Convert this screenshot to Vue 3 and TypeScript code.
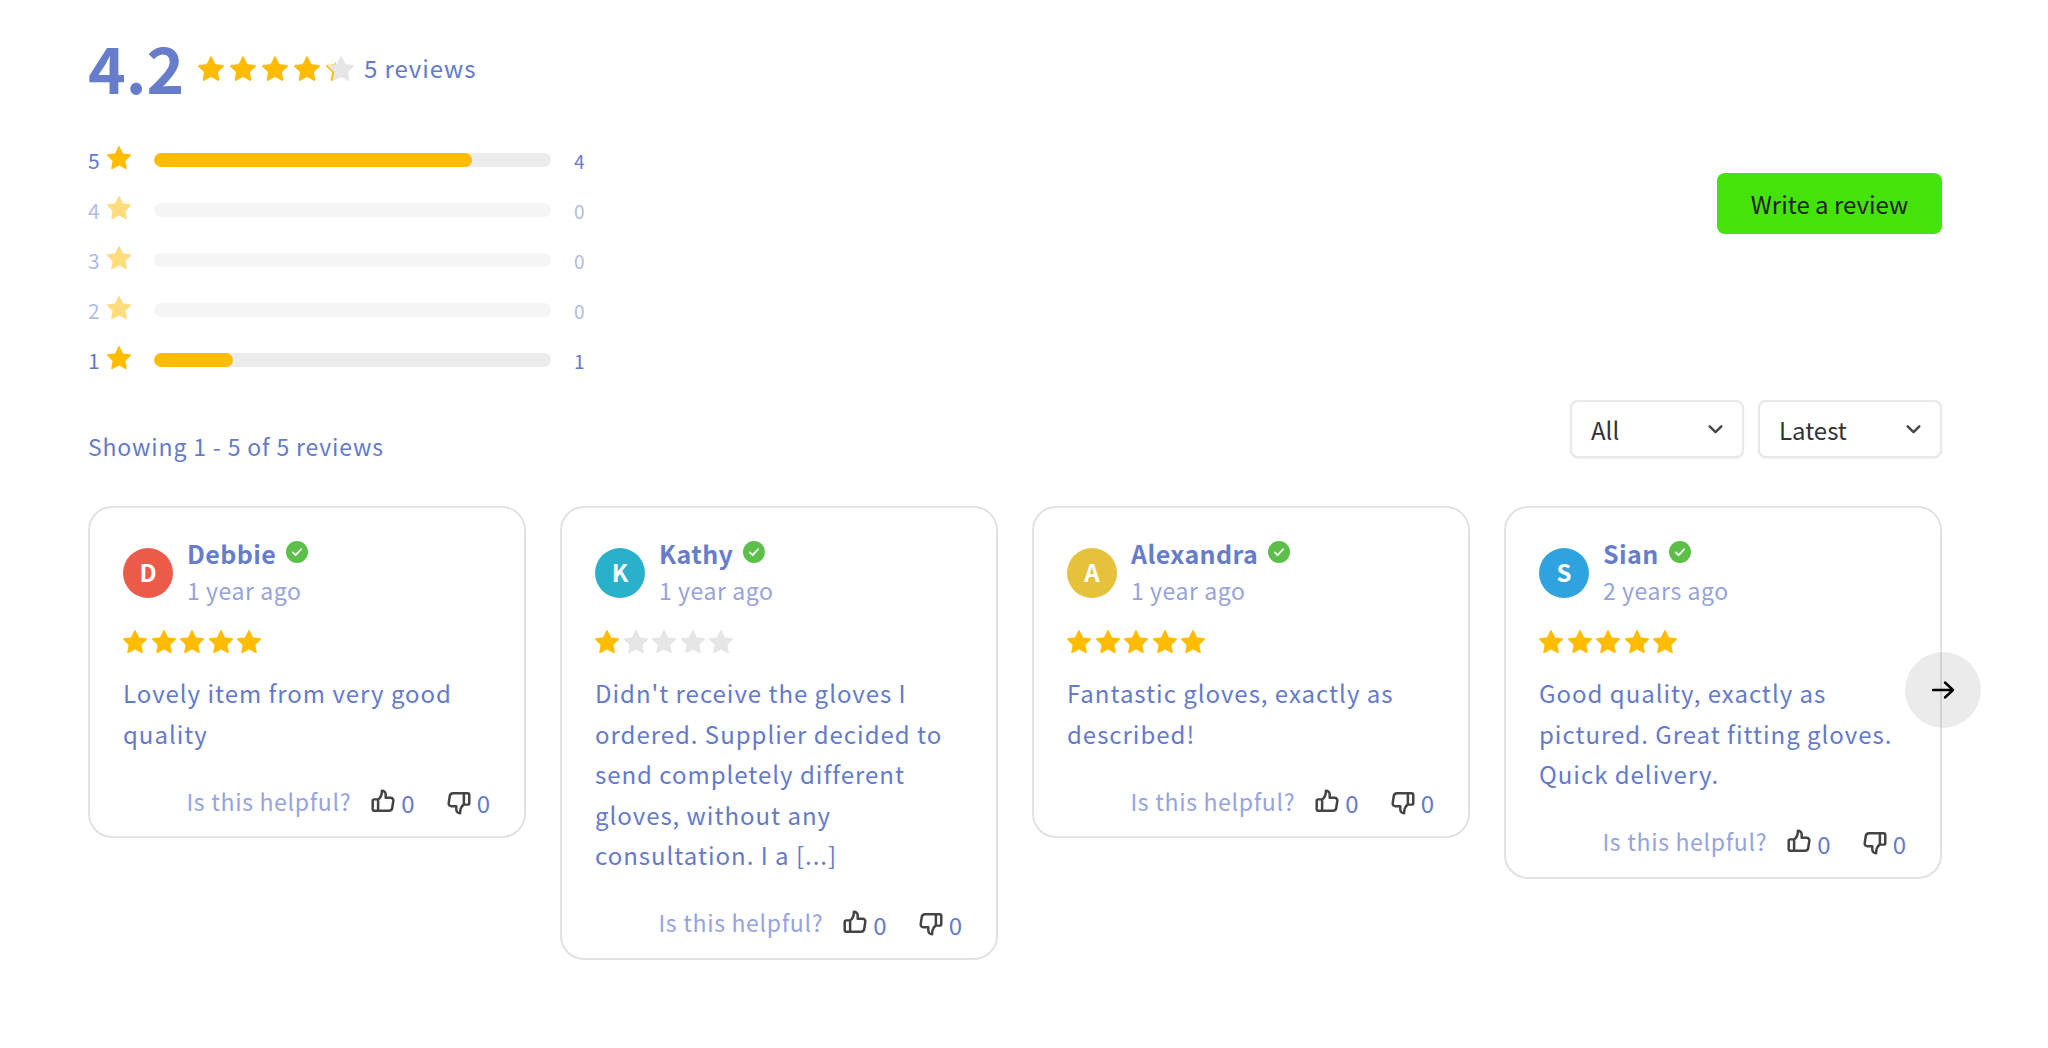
<script setup lang="ts">
interface Review {
  name: string;
  initial: string;
  color: string;
  date: string;
  rating: number;
  text: string;
}

const STAR =
  "M12 2.6l2.9 6.1 6.6.9-4.8 4.6 1.2 6.6L12 17.6l-5.9 3.2 1.2-6.6-4.8-4.6 6.6-.9z";
const THUMB =
  "M7.5 10.5V21H4a1.5 1.5 0 0 1-1.5-1.5V12A1.5 1.5 0 0 1 4 10.5h3.5c2.5-1.5 3.5-5 3.5-8 2 0 3.5 1.5 3.5 3.5v3h4.5a2.5 2.5 0 0 1 2.5 3l-1 6.5A3 3 0 0 1 17.5 21h-10";

const bars = [
  { label: 5, count: 4, width: 80 },
  { label: 4, count: 0, width: 0 },
  { label: 3, count: 0, width: 0 },
  { label: 2, count: 0, width: 0 },
  { label: 1, count: 1, width: 20 },
];

const reviews: Review[] = [
  {
    name: "Debbie",
    initial: "D",
    color: "#ec5a4a",
    date: "1 year ago",
    rating: 5,
    text: "Lovely item from very good quality",
  },
  {
    name: "Kathy",
    initial: "K",
    color: "#29b1cc",
    date: "1 year ago",
    rating: 1,
    text: "Didn't receive the gloves I ordered. Supplier decided to send completely different gloves, without any consultation. I a [...]",
  },
  {
    name: "Alexandra",
    initial: "A",
    color: "#e6c13a",
    date: "1 year ago",
    rating: 5,
    text: "Fantastic gloves, exactly as described!",
  },
  {
    name: "Sian",
    initial: "S",
    color: "#2fa3dd",
    date: "2 years ago",
    rating: 5,
    text: "Good quality, exactly as pictured. Great fitting gloves. Quick delivery.",
  },
];
</script>

<template>
  <div class="page">
    <header class="top">
      <div class="summary">
        <div class="score">
          <span class="score-value">4.2</span>
          <div class="score-stars">
            <svg v-for="n in 4" :key="n" class="star-lg" viewBox="0 0 24 24">
              <path :d="STAR" class="on" />
            </svg>
            <span class="star-part">
              <span class="star-clip">
                <svg class="star-lg" viewBox="0 0 24 24">
                  <path :d="STAR" class="on" />
                </svg>
              </span>
              <svg class="star-lg star-over" viewBox="0 0 24 24">
                <path :d="STAR" class="off" />
              </svg>
            </span>
          </div>
          <span class="score-count">5 reviews</span>
        </div>
        <div class="bars">
          <div
            v-for="bar in bars"
            :key="bar.label"
            class="bar-row"
            :class="{ faded: bar.count === 0 }"
          >
            <span class="bar-label">{{ bar.label }}</span>
            <svg class="star-bar" viewBox="0 0 24 24">
              <path :d="STAR" class="on" />
            </svg>
            <div class="track">
              <div class="fill" :style="{ width: `${bar.width}%` }"></div>
            </div>
            <span class="bar-count">{{ bar.count }}</span>
          </div>
        </div>
      </div>
      <button class="write">Write a review</button>
    </header>

    <div class="toolbar">
      <span class="showing">Showing 1 - 5 of 5 reviews</span>
      <div class="selects">
        <div class="select select-all">
          <span>All</span>
          <svg class="chevron" viewBox="0 0 16 16">
            <path d="M2.5 5l5.5 5.5L13.5 5" />
          </svg>
        </div>
        <div class="select select-latest">
          <span>Latest</span>
          <svg class="chevron" viewBox="0 0 16 16">
            <path d="M2.5 5l5.5 5.5L13.5 5" />
          </svg>
        </div>
      </div>
    </div>

    <div class="cards">
      <article v-for="r in reviews" :key="r.name" class="card">
        <div class="person">
          <div class="avatar" :style="{ background: r.color }">{{ r.initial }}</div>
          <div class="who">
            <div class="name-row">
              <span class="name">{{ r.name }}</span>
              <svg class="verified" viewBox="0 0 24 24">
                <circle cx="12" cy="12" r="12" fill="#5cbf4a" />
                <path d="M7.5 12.5l3 3 6-6.5" fill="none" stroke="#fff" stroke-width="2" stroke-linecap="round" stroke-linejoin="round" />
              </svg>
            </div>
            <div class="date">{{ r.date }}</div>
          </div>
        </div>
        <div class="rating">
          <svg v-for="n in 5" :key="n" class="star-sm" viewBox="0 0 24 24">
            <path :d="STAR" :class="n <= r.rating ? 'on' : 'off'" />
          </svg>
        </div>
        <p class="text">{{ r.text }}</p>
        <div class="helpful">
          <span class="helpful-label">Is this helpful?</span>
          <span class="vote">
            <svg class="thumb" viewBox="0 0 24 24">
              <path :d="THUMB" />
            </svg>
            <span class="vote-count">0</span>
          </span>
          <span class="vote">
            <svg class="thumb down" viewBox="0 0 24 24">
              <path :d="THUMB" />
            </svg>
            <span class="vote-count">0</span>
          </span>
        </div>
      </article>
      <button class="next" aria-label="Next">
        <svg viewBox="0 0 24 24">
          <path d="M2 12h20M14 4.5l8 7.5-8 7.5" />
        </svg>
      </button>
    </div>
  </div>
</template>

<style scoped>
.page {
  padding: 25px 106px 0 88px;
  font-family: "Noto Sans CJK SC", "Noto Sans", sans-serif;
  color: #657ac9;
}

.top {
  display: flex;
  align-items: center;
  justify-content: space-between;
}

.summary {
  width: 497px;
}

.score {
  display: flex;
  align-items: center;
  height: 82px;
}

.score-value {
  font-size: 64px;
  font-weight: 700;
  line-height: 82px;
  width: 108px;
  color: #677ccb;
}

.score-stars {
  display: flex;
  gap: 2px;
  margin-top: 6px;
}

.star-lg {
  display: block;
  width: 30px;
  height: 30px;
}

.star-part {
  position: relative;
  display: block;
}

.star-clip {
  position: absolute;
  left: 0;
  top: 0;
  width: 36%;
  overflow: hidden;
}

.star-over {
  position: relative;
  left: 2px;
  margin-right: 3px;
}

.on {
  fill: #ffbc00;
  stroke: #ffbc00;
  stroke-width: 1.5;
  stroke-linejoin: round;
}

.off {
  fill: #e6e6e6;
  stroke: #e6e6e6;
  stroke-width: 1.5;
  stroke-linejoin: round;
}

.score-count {
  margin: 3px 0 0 7px;
  font-size: 24px;
  letter-spacing: 0.9px;
}

.bars {
  margin-top: 39px;
  display: flex;
  flex-direction: column;
  gap: 22px;
}

.bar-row {
  display: flex;
  align-items: center;
  height: 28px;
}

.bar-row.faded {
  opacity: 0.5;
}

.bar-label {
  width: 11px;
  font-size: 21px;
}

.star-bar {
  display: block;
  width: 28px;
  height: 28px;
  margin-left: 6px;
  margin-top: -4px;
}

.track {
  margin-left: 21px;
  width: 397px;
  height: 14px;
  border-radius: 7px;
  background: #ececec;
  overflow: hidden;
}

.fill {
  height: 100%;
  border-radius: 7px;
  background: #ffbc00;
}

.bar-count {
  margin-left: 23px;
  font-size: 19px;
}

.write {
  width: 225px;
  height: 61px;
  margin-top: 8px;
  border: 0;
  border-radius: 8px;
  background: #44e30a;
  color: #222;
  font-family: inherit;
  font-size: 24px;
  cursor: pointer;
}

.toolbar {
  display: flex;
  align-items: flex-start;
  justify-content: space-between;
  margin-top: 26px;
}

.showing {
  padding-top: 28px;
  font-size: 23px;
  line-height: 36px;
  letter-spacing: 0.85px;
}

.selects {
  display: flex;
  gap: 14px;
}

.select {
  display: flex;
  align-items: center;
  justify-content: space-between;
  box-sizing: border-box;
  height: 58px;
  padding: 0 18px 0 19px;
  border: 2px solid #e8e8e8;
  border-radius: 8px;
  background: #fff;
  box-shadow: 0 1px 2px rgba(0, 0, 0, 0.06);
  color: #333;
  font-size: 24px;
}

.select-all {
  width: 174px;
}

.select-latest {
  width: 184px;
}

.chevron {
  width: 17px;
  height: 17px;
  fill: none;
  stroke: #444;
  stroke-width: 2.2;
  stroke-linecap: round;
  stroke-linejoin: round;
}

.cards {
  position: relative;
  display: grid;
  grid-template-columns: repeat(4, 1fr);
  gap: 34px;
  align-items: start;
  margin-top: 42px;
}

.card {
  box-sizing: border-box;
  padding: 29px 34px 16px 33px;
  border: 2px solid #e2e2e2;
  border-radius: 24px;
  background: #fff;
}

.person {
  display: flex;
  align-items: flex-start;
  gap: 14px;
}

.avatar {
  display: flex;
  align-items: center;
  justify-content: center;
  flex-shrink: 0;
  box-sizing: border-box;
  width: 50px;
  height: 50px;
  margin-top: 11px;
  padding-bottom: 3px;
  border-radius: 50%;
  color: #fff;
  font-size: 24px;
  font-weight: 700;
}

.name-row {
  display: flex;
  align-items: center;
  gap: 10px;
  height: 31px;
}

.name {
  font-size: 25px;
  font-weight: 700;
  letter-spacing: 0.4px;
  color: #677ccb;
}

.verified {
  width: 22px;
  height: 22px;
  margin-top: -1px;
}

.date {
  font-size: 23px;
  line-height: 44px;
  letter-spacing: 0.58px;
  color: #95a3de;
}

.rating {
  display: flex;
  gap: 0.5px;
  margin: 16px 0 0 -2px;
}

.star-sm {
  display: block;
  width: 28px;
  height: 28px;
}

.text {
  margin: 17px 0 0;
  font-size: 24px;
  line-height: 40.5px;
  letter-spacing: 0.98px;
}

.helpful {
  display: flex;
  align-items: center;
  justify-content: flex-end;
  margin-top: 27px;
}

.helpful-label {
  font-size: 23px;
  letter-spacing: 0.69px;
  color: #95a3de;
}

.vote {
  display: flex;
  align-items: center;
  margin-left: 19px;
}

.vote + .vote {
  margin-left: 31px;
}

.thumb {
  width: 26px;
  height: 26px;
  fill: none;
  stroke: #444;
  stroke-width: 2.3;
  stroke-linejoin: round;
  margin-right: 5px;
}

.thumb.down {
  transform: rotate(180deg) translateY(-2px);
}

.vote-count {
  font-size: 24px;
  margin-top: 4px;
}

.next {
  position: absolute;
  right: -39px;
  top: 146px;
  display: flex;
  align-items: center;
  justify-content: center;
  width: 76px;
  height: 76px;
  padding: 0;
  border: 0;
  border-radius: 50%;
  background: rgba(0, 0, 0, 0.08);
  cursor: pointer;
}

.next svg {
  width: 24px;
  height: 24px;
  fill: none;
  stroke: #000;
  stroke-width: 2.4;
  stroke-linecap: round;
  stroke-linejoin: round;
}
</style>
